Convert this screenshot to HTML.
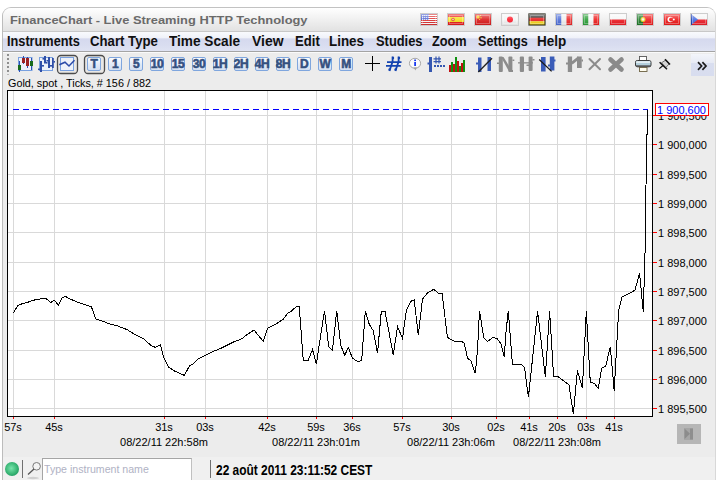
<!DOCTYPE html>
<html><head><meta charset="utf-8"><style>
*{margin:0;padding:0;box-sizing:border-box}
html,body{width:716px;height:480px;overflow:hidden;background:#fff;font-family:"Liberation Sans",sans-serif}
.abs{position:absolute}
#win{position:absolute;left:2px;top:7px;width:714px;height:480px;border:1px solid #c2c2c2;border-left-color:#bcbcbc;border-right-color:#d8d8d8;border-radius:9px 9px 0 0;background:#ececec;overflow:hidden}
#title{position:absolute;left:0;top:0;width:100%;height:24px;background:linear-gradient(#ffffff,#f6f6f6 30%,#e2e2e2);border-bottom:1px solid #c8c8c8}
.flag{position:absolute;top:5px}
#menu{position:absolute;left:0;top:24px;width:712px;height:20px;background:linear-gradient(#f9fafd,#eff1f9 31%,#d5d9ee 36%,#d9ddf0 70%,#dfe3f3);border-bottom:1px solid #a4a4a4}
.tb{position:absolute;top:57px;width:14px;height:14px;border:1px solid #7fa6de;border-radius:2px;background:linear-gradient(#fbfcfe,#e4ebf7 50%,#d3dff2);}
.tb span{position:absolute;left:-2px;right:-2px;top:0px;text-align:center;font-weight:bold;font-size:12px;line-height:12px;color:#34507f;letter-spacing:-0.5px;-webkit-text-stroke:0.55px #34507f}
.sel{position:absolute;top:55px;width:21px;height:19px;border:2px solid #5e5e5e;border-radius:4px;background:#e4e4e4}
.xl{position:absolute;top:421px;width:60px;text-align:center;font-size:11px;color:#000;white-space:nowrap}
.dl{position:absolute;top:436px;width:120px;text-align:center;font-size:11px;color:#000;white-space:nowrap}
.yl{position:absolute;left:658px;font-size:11px;line-height:14px;color:#000;white-space:nowrap}
</style></head><body>
<div id="win">
 <div id="title"></div>
 <div id="menu"></div>
 <div style="position:absolute;left:0;top:44px;width:712px;height:1px;background:#fafafa"></div>
 <div style="position:absolute;left:0;top:449px;width:100%;height:40px;background:#f0f0f0"></div>
</div>
<div style="position:absolute;left:10.03px;top:14.00px;font:bold 11px Liberation Sans;line-height:normal;white-space:pre;transform:scaleX(1.1692);transform-origin:0 0;color:#6a6a6a">FinanceChart - Live Streaming HTTP Technology</div>
<div style="position:absolute;left:6.89px;top:33.00px;font:bold 14px Liberation Sans;line-height:normal;white-space:pre;transform:scaleX(0.9089);transform-origin:0 0;color:#101010">Instruments</div><div style="position:absolute;left:90.00px;top:33.00px;font:bold 14px Liberation Sans;line-height:normal;white-space:pre;transform:scaleX(0.9417);transform-origin:0 0;color:#101010">Chart Type</div><div style="position:absolute;left:169.40px;top:33.00px;font:bold 14px Liberation Sans;line-height:normal;white-space:pre;transform:scaleX(0.9740);transform-origin:0 0;color:#101010">Time Scale</div><div style="position:absolute;left:252.20px;top:33.00px;font:bold 14px Liberation Sans;line-height:normal;white-space:pre;transform:scaleX(0.9938);transform-origin:0 0;color:#101010">View</div><div style="position:absolute;left:294.86px;top:33.00px;font:bold 14px Liberation Sans;line-height:normal;white-space:pre;transform:scaleX(0.9360);transform-origin:0 0;color:#101010">Edit</div><div style="position:absolute;left:329.34px;top:33.00px;font:bold 14px Liberation Sans;line-height:normal;white-space:pre;transform:scaleX(0.9571);transform-origin:0 0;color:#101010">Lines</div><div style="position:absolute;left:376.00px;top:33.00px;font:bold 14px Liberation Sans;line-height:normal;white-space:pre;transform:scaleX(0.9200);transform-origin:0 0;color:#101010">Studies</div><div style="position:absolute;left:432.00px;top:33.00px;font:bold 14px Liberation Sans;line-height:normal;white-space:pre;transform:scaleX(0.9105);transform-origin:0 0;color:#101010">Zoom</div><div style="position:absolute;left:478.00px;top:33.00px;font:bold 14px Liberation Sans;line-height:normal;white-space:pre;transform:scaleX(0.9018);transform-origin:0 0;color:#101010">Settings</div><div style="position:absolute;left:537.34px;top:33.00px;font:bold 14px Liberation Sans;line-height:normal;white-space:pre;transform:scaleX(0.9621);transform-origin:0 0;color:#101010">Help</div>
<svg width="0" height="0" style="position:absolute"><defs><linearGradient id="gl" x1="0" y1="0" x2="0" y2="1"><stop offset="0" stop-color="#fff" stop-opacity=".45"/><stop offset=".5" stop-color="#fff" stop-opacity=".1"/><stop offset="1" stop-color="#000" stop-opacity=".08"/></linearGradient></defs></svg>
<svg style="position:absolute;left:420px;top:13px" width="18" height="13"><rect x="0.5" y="0.5" width="17" height="12" fill="none" stroke="#cdcdcd"/><g transform="translate(1 1)"><rect width="16" height="11" fill="#fff"/><rect x="0" y="0" width="16" height="1" fill="#dc3030"/><rect x="0" y="2" width="16" height="1" fill="#dc3030"/><rect x="0" y="4" width="16" height="1" fill="#dc3030"/><rect x="0" y="6" width="16" height="1" fill="#dc3030"/><rect x="0" y="8" width="16" height="1" fill="#dc3030"/><rect x="0" y="10" width="16" height="1" fill="#dc3030"/><rect x="0" y="0" width="8" height="6" fill="#4a5fd0"/><g fill="#fff"><rect x="1.2" y="1" width="1.1" height="1.1"/><rect x="1.2" y="3" width="1.1" height="1.1"/><rect x="1.2" y="5" width="1.1" height="1.1"/><rect x="3.2" y="1" width="1.1" height="1.1"/><rect x="3.2" y="3" width="1.1" height="1.1"/><rect x="3.2" y="5" width="1.1" height="1.1"/><rect x="5.2" y="1" width="1.1" height="1.1"/><rect x="5.2" y="3" width="1.1" height="1.1"/><rect x="5.2" y="5" width="1.1" height="1.1"/><rect x="7.2" y="1" width="1.1" height="1.1"/><rect x="7.2" y="3" width="1.1" height="1.1"/><rect x="7.2" y="5" width="1.1" height="1.1"/></g><rect x="0" y="0" width="16" height="11" fill="url(#gl)"/><rect x="1.5" y="1.5" width="13" height="8" fill="none" stroke="#fff" stroke-opacity=".3"/></g></svg><svg style="position:absolute;left:447px;top:13px" width="18" height="13"><rect x="0.5" y="0.5" width="17" height="12" fill="none" stroke="#cdcdcd"/><g transform="translate(1 1)"><rect width="16" height="11" fill="#e81c1c"/><rect y="3" width="16" height="5" fill="#f6e020"/><circle cx="5" cy="5.5" r="1.8" fill="#e05030"/><circle cx="5" cy="5.5" r=".8" fill="#f6e8b0"/><rect x="0" y="0" width="16" height="11" fill="url(#gl)"/><rect x="1.5" y="1.5" width="13" height="8" fill="none" stroke="#fff" stroke-opacity=".3"/></g></svg><svg style="position:absolute;left:474px;top:13px" width="18" height="13"><rect x="0.5" y="0.5" width="17" height="12" fill="none" stroke="#cdcdcd"/><g transform="translate(1 1)"><rect width="16" height="11" fill="#dc1e1e"/><circle cx="3" cy="3" r="1.7" fill="#f8d020"/><circle cx="5.5" cy="1.6" r=".7" fill="#f8d020"/><circle cx="6" cy="3.8" r=".7" fill="#f8d020"/><circle cx="4.6" cy="5.4" r=".6" fill="#f8d020"/><rect x="0" y="0" width="16" height="11" fill="url(#gl)"/><rect x="1.5" y="1.5" width="13" height="8" fill="none" stroke="#fff" stroke-opacity=".3"/></g></svg><svg style="position:absolute;left:501px;top:13px" width="18" height="13"><rect x="0.5" y="0.5" width="17" height="12" fill="none" stroke="#cdcdcd"/><g transform="translate(1 1)"><rect width="16" height="11" fill="#f4f4f4"/><circle cx="8" cy="5.5" r="3" fill="#ff2030"/><rect x="0" y="0" width="16" height="11" fill="url(#gl)"/><rect x="1.5" y="1.5" width="13" height="8" fill="none" stroke="#fff" stroke-opacity=".3"/></g></svg><svg style="position:absolute;left:528px;top:13px" width="18" height="13"><rect x="0.5" y="0.5" width="17" height="12" fill="none" stroke="#cdcdcd"/><g transform="translate(1 1)"><rect width="16" height="4" fill="#2a2a2a"/><rect y="3.7" width="16" height="3.6" fill="#e82020"/><rect y="7.3" width="16" height="3.7" fill="#f8d818"/><rect x="0" y="0" width="16" height="11" fill="none" stroke="#303020" stroke-width="1"/><rect x="0" y="0" width="16" height="11" fill="url(#gl)"/><rect x="1.5" y="1.5" width="13" height="8" fill="none" stroke="#fff" stroke-opacity=".3"/></g></svg><svg style="position:absolute;left:555px;top:13px" width="18" height="13"><rect x="0.5" y="0.5" width="17" height="12" fill="none" stroke="#cdcdcd"/><g transform="translate(1 1)"><rect width="5.5" height="11" fill="#5070d8"/><rect x="5.5" width="5" height="11" fill="#f0f0f0"/><rect x="10.5" width="5.5" height="11" fill="#ec2828"/><rect x="0" y="0" width="16" height="11" fill="url(#gl)"/><rect x="1.5" y="1.5" width="13" height="8" fill="none" stroke="#fff" stroke-opacity=".3"/></g></svg><svg style="position:absolute;left:582px;top:13px" width="18" height="13"><rect x="0.5" y="0.5" width="17" height="12" fill="none" stroke="#cdcdcd"/><g transform="translate(1 1)"><rect width="5.5" height="11" fill="#2ea03a"/><rect x="5.5" width="5" height="11" fill="#f6f6f6"/><rect x="10.5" width="5.5" height="11" fill="#ee2020"/><rect x="0" y="0" width="16" height="11" fill="url(#gl)"/><rect x="1.5" y="1.5" width="13" height="8" fill="none" stroke="#fff" stroke-opacity=".3"/></g></svg><svg style="position:absolute;left:609px;top:13px" width="18" height="13"><rect x="0.5" y="0.5" width="17" height="12" fill="none" stroke="#cdcdcd"/><g transform="translate(1 1)"><rect width="16" height="5.5" fill="#f6f6f6"/><rect y="5.5" width="16" height="5.5" fill="#ee1e24"/><rect x="0" y="0" width="16" height="11" fill="url(#gl)"/><rect x="1.5" y="1.5" width="13" height="8" fill="none" stroke="#fff" stroke-opacity=".3"/></g></svg><svg style="position:absolute;left:636px;top:13px" width="18" height="13"><rect x="0.5" y="0.5" width="17" height="12" fill="none" stroke="#cdcdcd"/><g transform="translate(1 1)"><rect width="16" height="11" fill="#ee2020"/><rect width="6" height="11" fill="#1f7a28"/><circle cx="6" cy="5.5" r="2.5" fill="#f0d020"/><circle cx="6" cy="5.5" r="1.3" fill="#f4f4f4"/><rect x="0" y="0" width="16" height="11" fill="url(#gl)"/><rect x="1.5" y="1.5" width="13" height="8" fill="none" stroke="#fff" stroke-opacity=".3"/></g></svg><svg style="position:absolute;left:663px;top:13px" width="18" height="13"><rect x="0.5" y="0.5" width="17" height="12" fill="none" stroke="#cdcdcd"/><g transform="translate(1 1)"><rect width="16" height="11" fill="#ee1a1a"/><circle cx="6.3" cy="5.5" r="2.8" fill="#fff"/><circle cx="7.2" cy="5.5" r="2.1" fill="#ee1a1a"/><circle cx="9.8" cy="5.5" r="1" fill="#fff"/><rect x="0" y="0" width="16" height="11" fill="url(#gl)"/><rect x="1.5" y="1.5" width="13" height="8" fill="none" stroke="#fff" stroke-opacity=".3"/></g></svg><svg style="position:absolute;left:690px;top:13px" width="18" height="13"><rect x="0.5" y="0.5" width="17" height="12" fill="none" stroke="#cdcdcd"/><g transform="translate(1 1)"><rect width="16" height="5.5" fill="#f4f4f4"/><rect y="5.5" width="16" height="5.5" fill="#ec1e28"/><path d="M0 0 L7 5.5 L0 11Z" fill="#4a6ee0"/><rect x="0" y="0" width="1" height="11" fill="#2040b0"/><rect x="0" y="0" width="16" height="11" fill="url(#gl)"/><rect x="1.5" y="1.5" width="13" height="8" fill="none" stroke="#fff" stroke-opacity=".3"/></g></svg>
<svg style="position:absolute;left:0;top:0" width="716" height="480"><rect x="7.5" y="90.5" width="645" height="326" fill="#fff" stroke="#000" stroke-width="1"/><line x1="13.5" y1="91" x2="13.5" y2="416" stroke="#d9d9d9"/><line x1="54.5" y1="91" x2="54.5" y2="416" stroke="#d9d9d9"/><line x1="164.5" y1="91" x2="164.5" y2="416" stroke="#d9d9d9"/><line x1="205.5" y1="91" x2="205.5" y2="416" stroke="#d9d9d9"/><line x1="267.5" y1="91" x2="267.5" y2="416" stroke="#d9d9d9"/><line x1="316.5" y1="91" x2="316.5" y2="416" stroke="#d9d9d9"/><line x1="352.5" y1="91" x2="352.5" y2="416" stroke="#d9d9d9"/><line x1="402.5" y1="91" x2="402.5" y2="416" stroke="#d9d9d9"/><line x1="451.5" y1="91" x2="451.5" y2="416" stroke="#d9d9d9"/><line x1="496.5" y1="91" x2="496.5" y2="416" stroke="#d9d9d9"/><line x1="529.5" y1="91" x2="529.5" y2="416" stroke="#d9d9d9"/><line x1="557.5" y1="91" x2="557.5" y2="416" stroke="#d9d9d9"/><line x1="586.5" y1="91" x2="586.5" y2="416" stroke="#d9d9d9"/><line x1="614.5" y1="91" x2="614.5" y2="416" stroke="#d9d9d9"/><line x1="8" y1="408.5" x2="652" y2="408.5" stroke="#d9d9d9"/><line x1="8" y1="379.5" x2="652" y2="379.5" stroke="#d9d9d9"/><line x1="8" y1="350.5" x2="652" y2="350.5" stroke="#d9d9d9"/><line x1="8" y1="320.5" x2="652" y2="320.5" stroke="#d9d9d9"/><line x1="8" y1="291.5" x2="652" y2="291.5" stroke="#d9d9d9"/><line x1="8" y1="262.5" x2="652" y2="262.5" stroke="#d9d9d9"/><line x1="8" y1="232.5" x2="652" y2="232.5" stroke="#d9d9d9"/><line x1="8" y1="203.5" x2="652" y2="203.5" stroke="#d9d9d9"/><line x1="8" y1="174.5" x2="652" y2="174.5" stroke="#d9d9d9"/><line x1="8" y1="144.5" x2="652" y2="144.5" stroke="#d9d9d9"/><line x1="8" y1="115.5" x2="652" y2="115.5" stroke="#d9d9d9"/><line x1="13" y1="109.5" x2="648" y2="109.5" stroke="#0000ff" stroke-dasharray="6 4"/><polyline fill="none" stroke="#000" stroke-width="1" shape-rendering="crispEdges" stroke-linejoin="miter" points="13.3,313.3 17.5,306 19.5,304.6 28.9,301.9 32.7,300.4 37.25,299.4 45.6,298.3 50.8,302.5 54.3,300.2 58.5,305.4 62.25,297.7 65.4,296.25 68.5,298.3 76.8,301.9 91.4,306.7 95.6,319 106,322.3 108.3,323.5 117.7,326 127,329.6 136.5,335.4 143.75,339 151,345.4 155.2,347.3 160.4,344.8 163.5,357.3 168.75,367.3 175,371.25 184.4,375.4 189.6,365.6 192.7,364.2 198,358.75 204.4,356 212.7,351.5 220,348.75 233.5,342 241.9,338.75 247,334.6 254,330 263.3,341.5 267.5,328.3 276.25,323.75 283.5,319 287.7,313.3 291.7,310.8 295.8,307 299.2,306.2 303.3,360.8 308,360.8 312.5,349.5 316.3,364.2 324.5,310.8 328.7,346.7 332.5,350.3 336.7,310.8 340.8,345.5 344.7,355.3 348.3,347.5 352.5,358.3 357.5,361.3 361.7,360.8 365.3,310.8 366.7,315.8 369.2,324.2 373.3,330.8 377.5,353.3 381.3,311.3 385,311.3 393.3,355 397.5,326.7 402.5,338.3 406.3,310.8 410.8,301.3 414.2,300 418.3,335 422.5,299.2 427.5,293 433.7,289.2 438.3,293.3 442,293.3 447.5,337.5 454.2,341.3 462.5,342 464.2,343 467.5,358.3 470.8,360.8 475.3,373.3 477.5,350 479.5,310.8 483.7,337.5 487.5,341.5 493,337.5 496.7,338.3 500.8,343.3 504.2,357 506.2,330 508.3,310.8 512.5,364.7 520.8,364.3 524.5,367.2 528.4,397.4 537.6,311.1 545.3,376.5 549.6,311.1 553.6,376.3 558,376.5 569,385 573.3,414.2 577.4,370.4 582.4,388.2 586.3,311.3 590.3,382.5 594.2,383.3 598.3,388.3 601.7,368.3 605.8,365.8 610.3,346.7 614.2,390.8 618.7,310 622,297 635,290.3 639.5,273 643.3,311.7 645.5,236 646.5,135 647.5,134 647.5,109.5"/><line x1="652.5" y1="90" x2="652.5" y2="417" stroke="#000"/><line x1="13.5" y1="417" x2="13.5" y2="419" stroke="#ff0000"/><line x1="54.5" y1="417" x2="54.5" y2="419" stroke="#ff0000"/><line x1="164.5" y1="417" x2="164.5" y2="419" stroke="#ff0000"/><line x1="205.5" y1="417" x2="205.5" y2="419" stroke="#ff0000"/><line x1="267.5" y1="417" x2="267.5" y2="419" stroke="#ff0000"/><line x1="316.5" y1="417" x2="316.5" y2="419" stroke="#ff0000"/><line x1="352.5" y1="417" x2="352.5" y2="419" stroke="#ff0000"/><line x1="402.5" y1="417" x2="402.5" y2="419" stroke="#ff0000"/><line x1="451.5" y1="417" x2="451.5" y2="419" stroke="#ff0000"/><line x1="496.5" y1="417" x2="496.5" y2="419" stroke="#ff0000"/><line x1="529.5" y1="417" x2="529.5" y2="419" stroke="#ff0000"/><line x1="557.5" y1="417" x2="557.5" y2="419" stroke="#ff0000"/><line x1="586.5" y1="417" x2="586.5" y2="419" stroke="#ff0000"/><line x1="614.5" y1="417" x2="614.5" y2="419" stroke="#ff0000"/><line x1="653" y1="408.5" x2="657" y2="408.5" stroke="#ff0000"/><line x1="653" y1="379.5" x2="657" y2="379.5" stroke="#ff0000"/><line x1="653" y1="350.5" x2="657" y2="350.5" stroke="#ff0000"/><line x1="653" y1="320.5" x2="657" y2="320.5" stroke="#ff0000"/><line x1="653" y1="291.5" x2="657" y2="291.5" stroke="#ff0000"/><line x1="653" y1="262.5" x2="657" y2="262.5" stroke="#ff0000"/><line x1="653" y1="232.5" x2="657" y2="232.5" stroke="#ff0000"/><line x1="653" y1="203.5" x2="657" y2="203.5" stroke="#ff0000"/><line x1="653" y1="174.5" x2="657" y2="174.5" stroke="#ff0000"/><line x1="653" y1="144.5" x2="657" y2="144.5" stroke="#ff0000"/><line x1="653" y1="115.5" x2="657" y2="115.5" stroke="#ff0000"/></svg>
<div class="xl" style="left:-17px">57s</div><div class="xl" style="left:24px">45s</div><div class="xl" style="left:134px">31s</div><div class="xl" style="left:175px">03s</div><div class="xl" style="left:237px">42s</div><div class="xl" style="left:286px">59s</div><div class="xl" style="left:322px">36s</div><div class="xl" style="left:372px">57s</div><div class="xl" style="left:421px">30s</div><div class="xl" style="left:466px">02s</div><div class="xl" style="left:499px">41s</div><div class="xl" style="left:527px">20s</div><div class="xl" style="left:556px">03s</div><div class="xl" style="left:584px">41s</div><div class="dl" style="left:104px">08/22/11 22h:58m</div><div class="dl" style="left:256px">08/22/11 23h:01m</div><div class="dl" style="left:391px">08/22/11 23h:06m</div><div class="dl" style="left:497px">08/22/11 23h:08m</div><div class="yl" style="top:402px">1 895,500</div><div class="yl" style="top:373px">1 896,000</div><div class="yl" style="top:344px">1 896,500</div><div class="yl" style="top:314px">1 897,000</div><div class="yl" style="top:285px">1 897,500</div><div class="yl" style="top:256px">1 898,000</div><div class="yl" style="top:226px">1 898,500</div><div class="yl" style="top:197px">1 899,000</div><div class="yl" style="top:168px">1 899,500</div><div class="yl" style="top:138px">1 900,000</div><div class="yl" style="top:109px">1 900,500</div>
<div style="position:absolute;left:7.80px;top:77.00px;font:11px Liberation Sans;line-height:normal;white-space:pre;transform:scaleX(0.9821);transform-origin:0 0;color:#000">Gold, spot , Ticks, # 156 / 882</div>
<div class="abs" style="left:655px;top:103px;width:54px;height:13px;border:1px solid #ff0000;background:#fff"></div>
<div class="abs" style="left:657px;top:102.5px;font-size:11px;line-height:14px;color:#0000ff;white-space:nowrap">1 900,600</div>
<svg style="position:absolute;left:0;top:0" width="716" height="80"><rect x="84.5" y="55.5" width="20" height="18" rx="3.5" fill="#e9e7e4" stroke="#4c4c4c" stroke-width="1.3"/></svg>
<div class="tb" style="left:87px"><span>T</span></div><div class="tb" style="left:108px"><span>1</span></div><div class="tb" style="left:129px"><span>5</span></div><div class="tb" style="left:150px"><span>10</span></div><div class="tb" style="left:171px"><span>15</span></div><div class="tb" style="left:192px"><span>30</span></div><div class="tb" style="left:213px"><span>1H</span></div><div class="tb" style="left:234px"><span>2H</span></div><div class="tb" style="left:255px"><span>4H</span></div><div class="tb" style="left:276px"><span>8H</span></div><div class="tb" style="left:297px"><span>D</span></div><div class="tb" style="left:318px"><span>W</span></div><div class="tb" style="left:339px"><span>M</span></div>
<div class="abs" style="left:5px;top:462px;width:14px;height:14px;border-radius:50%;background:radial-gradient(circle at 45% 45%,#78e4ac,#3cb878 50%,#17935a 85%)"></div>
<div class="abs" style="left:22px;top:460px;width:1px;height:18px;background:#707070"></div>
<div class="abs" style="left:42px;top:458px;width:150px;height:24px;border:1px solid #a5a5a5;border-right-color:#c0c0c0;background:#fff"></div>
<div style="position:absolute;left:43.50px;top:463.00px;font:11px Liberation Sans;line-height:normal;white-space:pre;transform:scaleX(0.9633);transform-origin:0 0;color:#b0b2c4">Type instrument name</div>
<div class="abs" style="left:210px;top:460px;width:1px;height:18px;background:#707070"></div>
<div style="position:absolute;left:216.00px;top:462.00px;font:bold 14px Liberation Sans;line-height:normal;white-space:pre;transform:scaleX(0.8511);transform-origin:0 0;color:#000">22 août 2011 23:11:52 CEST</div>
<div class="abs" style="left:677px;top:424px;width:24px;height:20px;background:#b6b6b6"></div>
<div class="abs" style="left:691px;top:54px;width:23px;height:22px;background:linear-gradient(#f3f5fa,#e7eaf4 40%,#d9deef 42%,#d8ddef)"></div>
<svg class="abs" style="left:690px;top:54px" width="24" height="22"><path d="M8 8.2L11.6 12L8 15.8M12.4 8.2L16 12L12.4 15.8" fill="none" stroke="#1a1a1a" stroke-width="1.7"/></svg>
<svg style="position:absolute;left:0;top:0" width="716" height="480" shape-rendering="geometricPrecision">
<g fill="#8e8e8e"><rect x="7" y="54" width="2" height="2"/><rect x="7" y="58" width="2" height="2"/><rect x="7" y="62" width="2" height="2"/><rect x="7" y="66" width="2" height="2"/><rect x="7" y="70" width="2" height="2"/><rect x="7" y="74" width="2" height="1" fill="#bbb"/></g>
<!-- candle icon -->
<rect x="18.5" y="57.5" width="13.5" height="13" fill="#edf1f9" stroke="#78a0e0" stroke-width="1"/>
<g stroke="#2b4fb0" stroke-width="1"><line x1="19.5" y1="61" x2="19.5" y2="72"/><line x1="23.5" y1="56" x2="23.5" y2="64"/><line x1="27.5" y1="57" x2="27.5" y2="68"/><line x1="31.5" y1="58" x2="31.5" y2="70"/></g>
<rect x="18" y="65" width="3" height="5" fill="#17691a"/><rect x="22" y="58" width="3" height="5" fill="#9c2222"/><rect x="26" y="58" width="3" height="8" fill="#9c2222"/><rect x="30" y="61" width="3" height="5" fill="#17691a"/>
<!-- bar icon -->
<rect x="39.5" y="57.5" width="13" height="13" fill="#edf1f9" stroke="#78a0e0" stroke-width="1"/>
<g fill="#2f4fa8"><rect x="40" y="61" width="2" height="11"/><rect x="38" y="68.5" width="2" height="1.6"/><rect x="42" y="65" width="2" height="1.6"/>
<rect x="44" y="56" width="2" height="7.5"/><rect x="42.5" y="58" width="1.5" height="1.6"/><rect x="46" y="62" width="1.5" height="1.6"/>
<rect x="48" y="57" width="2" height="11"/><rect x="46.5" y="60" width="1.5" height="1.5"/><rect x="50" y="65" width="2" height="1.6"/>
<rect x="52" y="58" width="1.8" height="10"/><rect x="53.5" y="61" width="1.5" height="1.6"/></g>
<!-- line icon (selected) -->
<rect x="57.5" y="55.5" width="20" height="18" rx="3.5" fill="#e9e7e4" stroke="#4c4c4c" stroke-width="1.3"/>
<rect x="60.5" y="57.5" width="13" height="13" fill="#edf1f9" stroke="#78a0e0" stroke-width="1"/>
<path d="M59.3 64.8L65 62.2L69 66L74.5 60.3" fill="none" stroke="#2b4aa8" stroke-width="1.5"/>
<!-- plus -->
<path d="M365 63.5H380M372.5 56V71" stroke="#000" stroke-width="1"/>
<!-- hash -->
<g stroke="#1444b0" stroke-width="1.8" fill="none"><path d="M387 62.1H401.5M386 65.8H400.8"/><path d="M392.6 56.5V61.5L389.4 71M398.6 56.5V61.5L395.4 71"/></g>
<g fill="#1444b0"><circle cx="393" cy="58" r="1.2"/><circle cx="399" cy="58" r="1.2"/><circle cx="389.6" cy="69.5" r="1.2"/><circle cx="395.6" cy="69.5" r="1.2"/></g>
<!-- info bubble -->
<ellipse cx="415" cy="63.3" rx="5.6" ry="5" fill="#fbfbfb" stroke="#a8a8a8" stroke-width="1"/>
<path d="M413.5 67.5L415.5 70.5L416.8 67.3Z" fill="#a0a0a0"/>
<rect x="414.2" y="62" width="1.8" height="4" fill="#1a3af0"/><rect x="414.2" y="59.5" width="1.8" height="1.6" fill="#1a3af0"/>
<!-- dotted vertical icon -->
<g fill="#3456b0"><rect x="429" y="57" width="3" height="15"/><rect x="427.5" y="62.5" width="2" height="2"/>
<rect x="434" y="65" width="2" height="2"/><rect x="437" y="65" width="2" height="2"/><rect x="440" y="65" width="2" height="2"/><rect x="443" y="65" width="2" height="2"/></g>
<g stroke="#3456b0" stroke-width="1.2" fill="none"><path d="M433.5 58.8H441M433.5 61.6H441M436 56.5V63.5M439 56.5V63.5"/></g>
<!-- volume bars -->
<g><rect x="449" y="65" width="2" height="7" fill="#c01010"/><rect x="451" y="62" width="2" height="10" fill="#109010"/><rect x="453" y="64" width="2" height="8" fill="#c01010"/><rect x="455" y="57" width="2" height="15" fill="#109010"/><rect x="457" y="61" width="2" height="11" fill="#c01010"/><rect x="459" y="66" width="2" height="6" fill="#109010"/><rect x="461" y="63" width="2" height="9" fill="#c01010"/><rect x="463" y="60" width="2" height="12" fill="#109010"/></g>
<!-- blue N with slash 1 -->
<g fill="#3a5cb8"><path d="M478 57.5h3.5V72h-3.5z"/><path d="M487.5 57h3.5v14h-3.5z"/><rect x="476" y="62.5" width="2" height="2"/></g>
<path d="M478.3 72L492 58.3" stroke="#222" stroke-width="1.4"/>
<!-- gray N -->
<g fill="#8c8c8c"><rect x="498.8" y="56.5" width="4" height="15.5" rx="1"/><rect x="508.4" y="56.5" width="4" height="15.5" rx="1"/><path d="M501 57L503.5 57L511.5 70L509 71.5Z"/><rect x="497" y="62.5" width="2" height="1.5"/><rect x="512.5" y="59.5" width="1.8" height="1.5"/><rect x="511" y="70" width="2" height="2"/></g>
<!-- gray H -->
<g fill="#8c8c8c"><rect x="519.8" y="56.5" width="4.2" height="15.5" rx="1"/><rect x="528.6" y="56.5" width="4" height="14.5" rx="1"/><rect x="518" y="62.2" width="15" height="1.3"/><rect x="532.5" y="59" width="2" height="1.5"/><rect x="526.5" y="64.5" width="2.5" height="1.5"/></g>
<!-- blue N with backslash -->
<g fill="#3a5cb8"><path d="M541 57h4.6V71.5H541z"/><path d="M549.8 56.5h4.6V70.5h-4.6z"/><rect x="554" y="59.5" width="1.5" height="2"/><rect x="548" y="64.5" width="2" height="2"/></g>
<path d="M539.2 59.5L551.6 71.4" stroke="#1a1a1a" stroke-width="1.3"/>
<!-- gray #-like icon -->
<g fill="#8c8c8c"><path d="M567.8 56.5h4.3V72h-4.3z"/><path d="M577 56.5h4.7V68h-4.7z"/><path d="M571 62L578 56.5L580 58.5L572.5 64.5Z"/><rect x="566" y="62.5" width="2" height="2"/><rect x="581.5" y="59.5" width="1.5" height="2"/></g>
<!-- thin X -->
<path d="M589.5 59L600 69.3M600 59L589.5 69.3" stroke="#8c8c8c" stroke-width="2" stroke-linecap="round"/>
<!-- big X -->
<path d="M610.5 59.5L621.5 69.5M621.5 59.5L610.5 69.5" stroke="#8a8a8a" stroke-width="4.6" stroke-linecap="round"/>
<!-- printer -->
<rect x="639.5" y="56.5" width="7" height="4" fill="#fff" stroke="#555" stroke-width="0.9"/>
<rect x="635.5" y="60.5" width="15.5" height="6.3" rx="1.8" fill="#b4d0dc" stroke="#3a3a3a" stroke-width="1"/>
<rect x="636.2" y="61.2" width="14" height="1.8" fill="#e4eef2"/>
<rect x="636" y="65.3" width="14.5" height="1.7" fill="#555"/>
<rect x="639.5" y="67.5" width="7.5" height="4" fill="#fffdf0" stroke="#6a6040" stroke-width="0.9"/>
<!-- pin -->
<path d="M661.5 62.8L665.8 60L669.2 63.8L665.8 67.6Z" fill="#d6d6d6" stroke="#444" stroke-width="0.7"/>
<path d="M659.3 68.6L663.3 65.2" stroke="#111" stroke-width="1.2"/>
<path d="M659.6 62.3L667 69.3" stroke="#111" stroke-width="1.5"/>
<path d="M665 59.2L670 64.4" stroke="#111" stroke-width="1.5"/>
<!-- scroll-right button icon -->
<rect x="684" y="428" width="9" height="12" fill="#a6a6a6"/>
<path d="M684.5 428.5L690 433.8L684.5 439Z" fill="#8c8c8c"/>
<rect x="690" y="428.5" width="3" height="11" fill="#8e8e8e"/>
<!-- magnifier -->
<ellipse cx="33" cy="478" rx="6" ry="1.2" fill="#d0d0d0"/>
<circle cx="36.6" cy="466.3" r="3.8" fill="#f4f4f4" stroke="#7a7a7a" stroke-width="1"/>
<path d="M34 469L28 474.5" stroke="#555" stroke-width="1.3"/>
</svg>

</body></html>
